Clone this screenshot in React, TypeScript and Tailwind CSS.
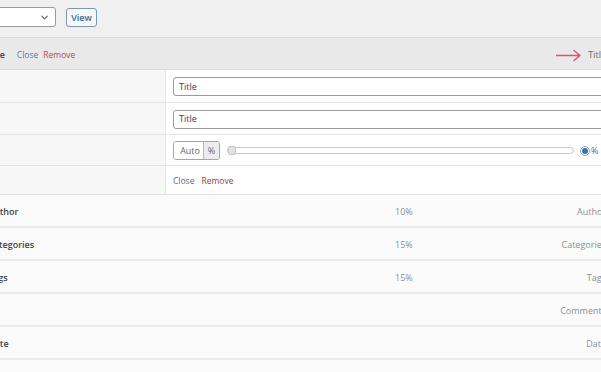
import { ChevronDown } from 'lucide-react';

const listRows = [
  { name: 'Author', pct: '10%', label: 'Author' },
  { name: 'Categories', pct: '15%', label: 'Categories' },
  { name: 'Tags', pct: '15%', label: 'Tags' },
  { name: 'Comments', pct: '', label: 'Comments', hideName: true },
  { name: 'Date', pct: '', label: 'Date' },
  { name: '', pct: '', label: '' },
];

function FormRow({ children, h }: { children: React.ReactNode; h: string }) {
  return (
    <div className={`flex ${h} border-b border-[#e4e4e4]`}>
      <div className="w-[181px] shrink-0 bg-[#f7f7f7] border-r border-[#e8e8e8]" />
      <div className="flex-1 flex items-center pl-[7px] pt-[1px] bg-white">{children}</div>
    </div>
  );
}

export default function App() {
  return (
    <div
      className="w-[601px] h-[372px] overflow-hidden bg-[#f0f0f1] text-[9px]"
      style={{ fontFamily: '"Open Sans", "Noto Sans", sans-serif' }}
    >
      <div className="ml-[-15px] w-[630px]">
        {/* Top toolbar */}
        <div className="h-[37px] flex items-start pt-[7px] gap-[10px]">
          <div className="w-[71px] h-[20px] bg-white border border-[#9a9a9a] rounded-[3px] flex items-center justify-end pr-[5px]">
            <ChevronDown size={11} strokeWidth={2.2} className="text-[#555]" />
          </div>
          <div className="mt-[1px] w-[31px] h-[19px] border border-[#7d97ad] rounded-[3px] bg-[#f6f7f7] flex items-center justify-center text-[#3f6a91] font-semibold">
            View
          </div>
        </div>

        {/* Header band */}
        <div className="h-[33px] bg-[#e9e9e9] border-t border-[#d6d6d6] border-b border-[#dcdcdc] flex items-center pt-[3px] pl-[1px] pr-[9px]">
          <span className="font-semibold text-[#3c434a]">Title</span>
          <span className="ml-[12px] text-[8.5px] text-[#4f7ea8]">Close</span>
          <span className="ml-[5px] text-[8.5px] text-[#c9444a]">Remove</span>
          <div className="ml-auto flex items-center gap-[6px]">
            <svg width="26" height="12" viewBox="0 0 26 12" fill="none">
              <path d="M0 6.5h24M18 1.5l6 5-6 5" stroke="#e0506a" strokeWidth="1.3" strokeLinecap="round" strokeLinejoin="round" />
            </svg>
            <span className="text-[#646970]">Title</span>
          </div>
        </div>

        {/* Edit form */}
        <FormRow h="h-[33px]">
          <div className="flex-1 h-[19px] mr-[4px] border border-[#9a9a9a] rounded-[3px] flex items-center px-[5px] text-[#3c434a]">
            Title
          </div>
        </FormRow>
        <FormRow h="h-[32px]">
          <div className="flex-1 h-[19px] mr-[4px] border border-[#9a9a9a] rounded-[3px] flex items-center px-[5px] text-[#3c434a]">
            Title
          </div>
        </FormRow>
        <FormRow h="h-[31px]">
          <div className="flex h-[19px] border border-[#a6a6a6] rounded-[3px] overflow-hidden">
            <div className="w-[29px] flex items-center justify-end pr-[3px] text-[#646970] bg-white">Auto</div>
            <div className="w-[16px] flex items-center justify-center text-[#646970] bg-[#ececec] border-l border-[#bbb]">%</div>
          </div>
          <div className="relative ml-[7px] w-[347px] h-[7px] border border-[#c8c8c8] rounded-full bg-white">
            <div className="absolute left-0 top-[-2px] w-[8px] h-[9px] rounded-[2px] bg-[#e2e2e2] border border-[#c4c4c4]" />
          </div>
          <div className="ml-[6px] w-[10px] h-[10px] rounded-full border border-[#8aa8c4] bg-white flex items-center justify-center">
            <div className="w-[6px] h-[6px] rounded-full bg-[#3c74b0]" />
          </div>
          <span className="ml-[1px] text-[#646970]">%</span>
        </FormRow>
        <FormRow h="h-[29px]">
          <span className="mt-[2px] text-[8.5px] text-[#3f74a6]">Close</span>
          <span className="mt-[2px] ml-[7px] text-[8.5px] text-[#a8372e]">Remove</span>
        </FormRow>

        {/* Column list */}
        <div className="bg-[#fbfbfb]">
          {listRows.map((r, i) => (
            <div
              key={i}
              className="grid grid-cols-[407px_1fr_auto] items-center h-[33px] border-b-[2px] border-[#ececec] pt-[3px] pl-[3px] pr-[9px]"
            >
              <span className="font-semibold text-[#3c434a]">{r.hideName ? '' : r.name}</span>
              <span className="text-[#8c8f94]">{r.pct}</span>
              <span className="text-[#8c8f94]">{r.label}</span>
            </div>
          ))}
        </div>
      </div>
    </div>
  );
}
